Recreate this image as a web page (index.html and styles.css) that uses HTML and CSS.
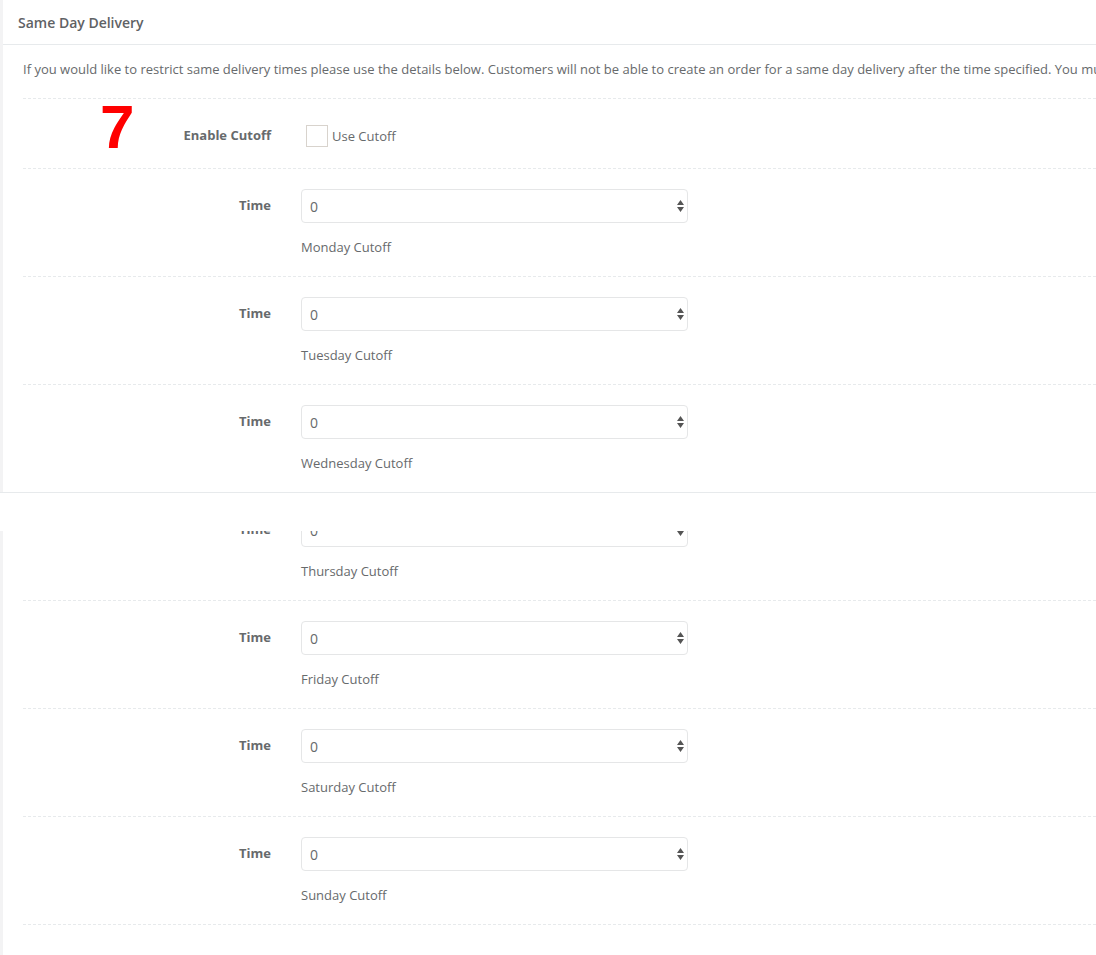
FILE: index.html
```html
<!DOCTYPE html>
<html lang="en">
<head>
  <meta charset="UTF-8" />
  <meta name="viewport" content="width=device-width, initial-scale=1.0" />
  <title>Same Day Delivery</title>
  <link rel="stylesheet" href="styles.css">
</head>
<body>
  <div class="page">
    <div class="ibox">
      <div class="ibox-title">
        <h5>Same Day Delivery</h5>
      </div>
      <div class="ibox-content">
        <p class="intro">If you would like to restrict same delivery times please use the details below. Customers will not be able to create an order for a same day delivery after the time specified. You must enter the time in 24 hour format.</p>

        <div class="form-row check-row">
          <label class="control-label">Enable Cutoff</label>
          <div class="controls">
            <label class="check"><span class="box"></span>Use Cutoff</label>
          </div>
        </div>

        <div class="form-row">
          <label class="control-label">Time</label>
          <div class="controls">
            <div class="select-wrap">
              <select class="form-control"><option>0</option></select>
              <svg class="arrows" width="7" height="12" viewBox="0 0 7 12"><path d="M3.5 0L7 5H0z M0 7h7L3.5 12z" fill="#555"/></svg>
            </div>
            <span class="help-block">Monday Cutoff</span>
          </div>
        </div>

        <div class="form-row">
          <label class="control-label">Time</label>
          <div class="controls">
            <div class="select-wrap">
              <select class="form-control"><option>0</option></select>
              <svg class="arrows" width="7" height="12" viewBox="0 0 7 12"><path d="M3.5 0L7 5H0z M0 7h7L3.5 12z" fill="#555"/></svg>
            </div>
            <span class="help-block">Tuesday Cutoff</span>
          </div>
        </div>

        <div class="form-row">
          <label class="control-label">Time</label>
          <div class="controls">
            <div class="select-wrap">
              <select class="form-control"><option>0</option></select>
              <svg class="arrows" width="7" height="12" viewBox="0 0 7 12"><path d="M3.5 0L7 5H0z M0 7h7L3.5 12z" fill="#555"/></svg>
            </div>
            <span class="help-block">Wednesday Cutoff</span>
          </div>
        </div>

        <div class="form-row">
          <label class="control-label">Time</label>
          <div class="controls">
            <div class="select-wrap">
              <select class="form-control"><option>0</option></select>
              <svg class="arrows" width="7" height="12" viewBox="0 0 7 12"><path d="M3.5 0L7 5H0z M0 7h7L3.5 12z" fill="#555"/></svg>
            </div>
            <span class="help-block">Thursday Cutoff</span>
          </div>
        </div>

        <div class="form-row">
          <label class="control-label">Time</label>
          <div class="controls">
            <div class="select-wrap">
              <select class="form-control"><option>0</option></select>
              <svg class="arrows" width="7" height="12" viewBox="0 0 7 12"><path d="M3.5 0L7 5H0z M0 7h7L3.5 12z" fill="#555"/></svg>
            </div>
            <span class="help-block">Friday Cutoff</span>
          </div>
        </div>

        <div class="form-row">
          <label class="control-label">Time</label>
          <div class="controls">
            <div class="select-wrap">
              <select class="form-control"><option>0</option></select>
              <svg class="arrows" width="7" height="12" viewBox="0 0 7 12"><path d="M3.5 0L7 5H0z M0 7h7L3.5 12z" fill="#555"/></svg>
            </div>
            <span class="help-block">Saturday Cutoff</span>
          </div>
        </div>

        <div class="form-row">
          <label class="control-label">Time</label>
          <div class="controls">
            <div class="select-wrap">
              <select class="form-control"><option>0</option></select>
              <svg class="arrows" width="7" height="12" viewBox="0 0 7 12"><path d="M3.5 0L7 5H0z M0 7h7L3.5 12z" fill="#555"/></svg>
            </div>
            <span class="help-block">Sunday Cutoff</span>
          </div>
        </div>
      </div>
    </div>

    <!-- step marker -->
    <div class="step-num">7</div>
    <!-- screenshot seam -->
    <div class="seam"></div>
  </div>
</body>
</html>
```

FILE: styles.css
```css
html, body {
  margin: 0;
  background: #fff;
  overflow: hidden;
}
body {
  font-family: "Open Sans", "Noto Sans", sans-serif;
  font-size: 13px;
  color: #676a6c;
}
.page {
  position: relative;
  min-height: 955px;
  border-left: 3px solid #f3f3f4;
}
.ibox-title {
  height: 44px;
  padding: 0 15px;
  border-bottom: 1px solid #e7eaec;
  display: flex;
  align-items: center;
}
.ibox-title h5 {
  margin: 0;
  font-size: 14px;
  font-weight: 600;
  color: #5f6265;
}
.ibox-content {
  padding: 0 0 0 20px;
}
.intro {
  margin: 0;
  padding: 15px 0 20px;
  line-height: 18px;
  white-space: nowrap;
  border-bottom: 1px dashed #e7eaec;
}
.form-row {
  display: grid;
  grid-template-columns: 248px 387px;
  column-gap: 30px;
  padding: 20px 0;
  border-bottom: 1px dashed #e7eaec;
}
.check-row {
  padding: 26px 0 21px;
}
.control-label {
  text-align: right;
  font-weight: 700;
  font-size: 13px;
  line-height: 18px;
  padding-top: 7px;
  color: #676a6c;
}
.check-row .control-label {
  padding-top: 1px;
}
.check {
  display: flex;
  align-items: center;
  gap: 4px;
  margin-left: 5px;
  line-height: 22px;
}
.box {
  width: 20px;
  height: 20px;
  border: 1px solid #d8d3cd;
  background: #fff;
}
.select-wrap {
  position: relative;
}
.form-control {
  display: block;
  width: 100%;
  height: 34px;
  box-sizing: border-box;
  padding: 0 8px;
  font-family: inherit;
  font-size: 14px;
  color: #676a6c;
  background: #fff;
  border: 1px solid #e5e6e7;
  border-radius: 4px;
  -webkit-appearance: none;
  appearance: none;
}
.arrows {
  position: absolute;
  right: 4px;
  top: 11px;
}
.help-block {
  display: block;
  margin-top: 15px;
  line-height: 18px;
  color: #676a6c;
}
.step-num {
  position: absolute;
  left: 97px;
  top: 92px;
  font-family: "Liberation Sans", Arial, sans-serif;
  font-weight: 700;
  font-size: 62px;
  line-height: 70px;
  color: #f00;
}
.seam {
  position: absolute;
  left: -3px;
  right: 0;
  top: 492px;
  height: 38px;
  background: #fff;
  border-top: 1px solid #e7eaec;
}
```
